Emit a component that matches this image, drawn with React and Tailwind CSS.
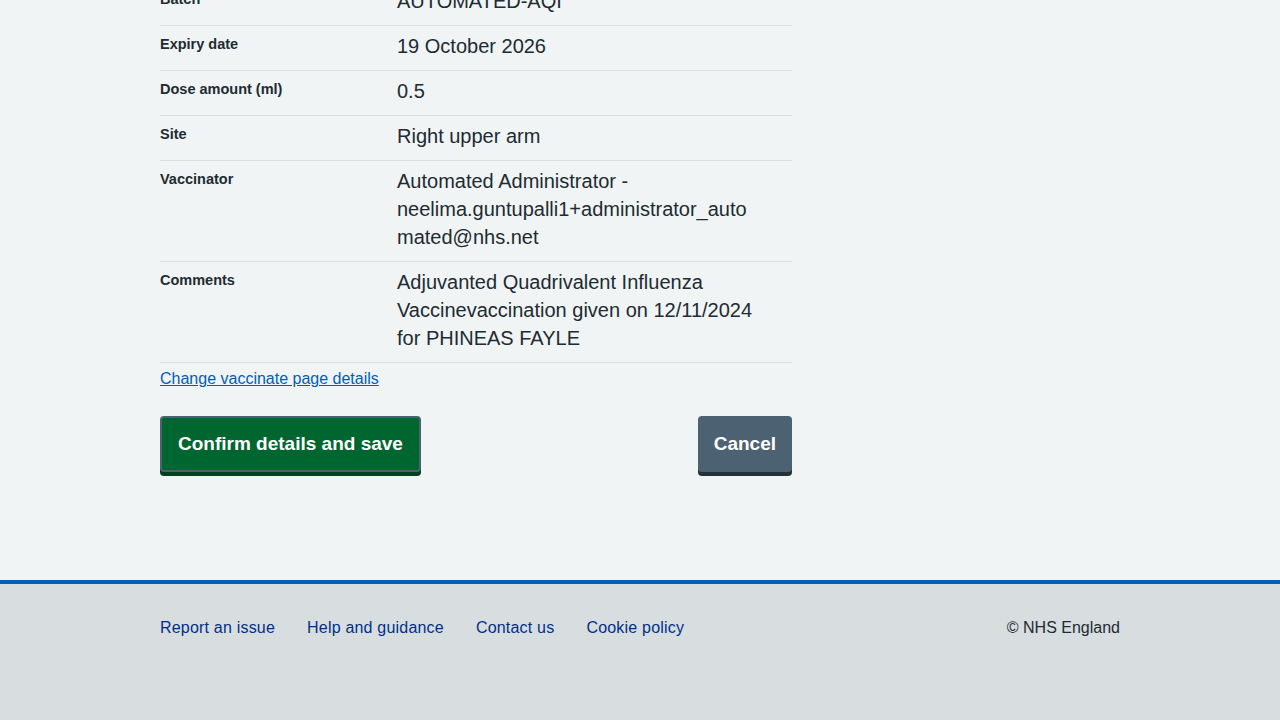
import React from 'react';

const rows = [
  { key: 'Batch', value: 'AUTOMATED-AQI' },
  { key: 'Expiry date', value: '19 October 2026' },
  { key: 'Dose amount (ml)', value: '0.5' },
  { key: 'Site', value: 'Right upper arm' },
  { key: 'Vaccinator', value: 'Automated Administrator - neelima.guntupalli1+administrator_automated@nhs.net' },
  { key: 'Comments', value: 'Adjuvanted Quadrivalent Influenza Vaccinevaccination given on 12/11/2024 for PHINEAS FAYLE' },
];

const footerLinks = ['Report an issue', 'Help and guidance', 'Contact us', 'Cookie policy'];

export default function App() {
  return (
    <div className="min-h-screen bg-[#f0f4f5] text-[#212b32] font-['Liberation_Sans',Arial,sans-serif] overflow-hidden">
      <main className="w-[960px] mx-auto pb-[108px]">
        <div className="w-[632px] -mt-[19px]">
          <dl>
            {rows.map(row => (
              <div key={row.key} className="flex border-b border-[#d8dde0] pt-[6px] pb-[10px]">
                <dt className="w-[237px] shrink-0 text-[14.5px] font-bold leading-6 pr-6">{row.key}</dt>
                <dd className="flex-1 pr-[29px] text-[20px] leading-7 [overflow-wrap:anywhere]">{row.value}</dd>
              </div>
            ))}
          </dl>

          <div className="pt-[4px]">
            <a href="#" className="text-[16px] leading-5 text-[#005eb8] underline">Change vaccinate page details</a>
          </div>

          <div className="flex justify-between items-start mt-[25px]">
            <button className="h-[56px] px-4 rounded border-2 border-[#4c6272] bg-[#00662f] text-white text-[19px] font-bold shadow-[0_4px_0_#00401e]">
              Confirm details and save
            </button>
            <button className="h-[56px] px-4 rounded bg-[#4c6272] text-white text-[19px] font-bold shadow-[0_4px_0_#263139]">
              Cancel
            </button>
          </div>
        </div>
      </main>

      <footer className="border-t-4 border-[#005eb8] bg-[#d8dde0] h-[200px]">
        <div className="w-[960px] mx-auto flex justify-between items-center pt-[32px]">
          <ul className="flex gap-8">
            {footerLinks.map(link => (
              <li key={link}>
                <a href="#" className="text-[16px] leading-5 text-[#003087] tracking-[0.2px]">{link}</a>
              </li>
            ))}
          </ul>
          <p className="text-[16px] leading-5 text-[#212b32]">© NHS England</p>
        </div>
      </footer>
    </div>
  );
}
